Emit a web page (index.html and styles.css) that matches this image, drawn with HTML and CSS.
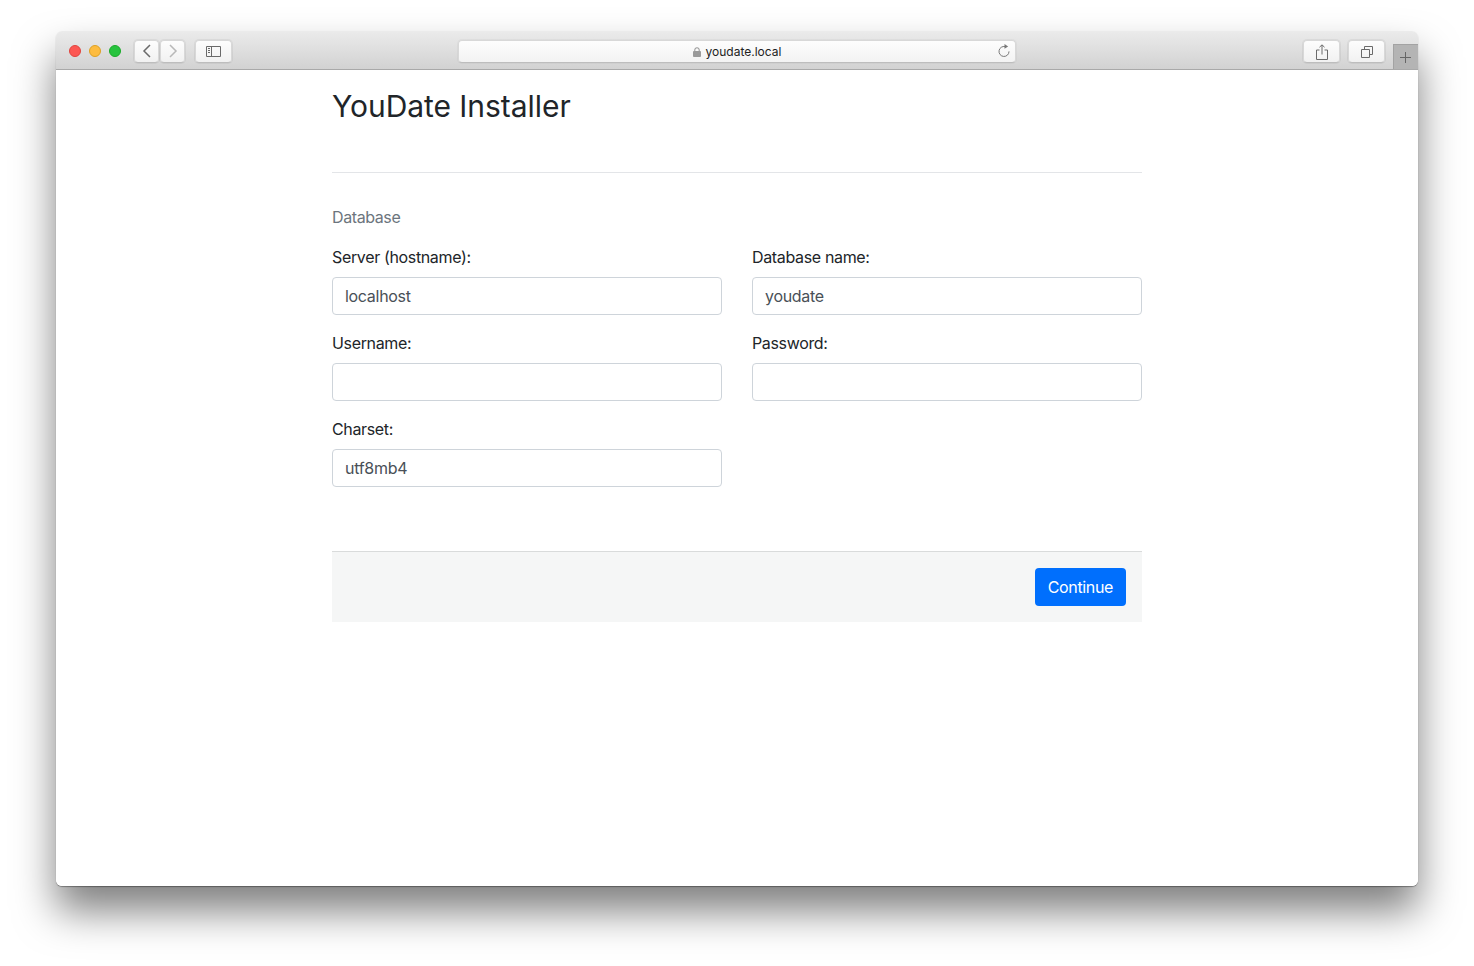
FILE: index.html
```html
<!DOCTYPE html>
<html lang="en">
<head>
  <meta charset="UTF-8">
  <title>YouDate Installer</title>
  <link rel="stylesheet" href="styles.css">
</head>
<body>
  <div class="window">
    <div class="titlebar">
      <div class="lights">
        <span class="light red"></span>
        <span class="light yellow"></span>
        <span class="light green"></span>
      </div>
      <div class="nav-group">
        <button class="tool tool-nav">
          <svg width="10" height="14" viewBox="0 0 10 14"><path d="M8 1 L2 7 L8 13" fill="none" stroke="#6a6a6a" stroke-width="1.5"/></svg>
        </button>
        <button class="tool tool-nav">
          <svg width="10" height="14" viewBox="0 0 10 14"><path d="M2 1 L8 7 L2 13" fill="none" stroke="#b8b8b8" stroke-width="1.5"/></svg>
        </button>
      </div>
      <button class="tool tool-side">
        <svg width="15" height="11" viewBox="0 0 15 11"><path d="M.5.5h14v10H.5zM5.5.5v10" fill="none" stroke="#6a6a6a"/><path d="M2 2.500h2M2 4.500h2M2 6.500h2" stroke="#6a6a6a"/></svg>
      </button>
      <div class="address">
        <svg class="lock" width="8" height="10" viewBox="0 0 9 11"><path d="M2 5V3.200a2.500 2.500 0 0 1 5 0V5" fill="none" stroke="#9a9a9a" stroke-width="1.200"/><rect y="4.500" width="9" height="6.500" rx="1" fill="#9a9a9a"/></svg>
        <span>youdate.local</span>
        <svg class="reload" width="12" height="13" viewBox="0 0 12 13"><path d="M7.200 2.600A5 5 0 1 0 11 7.400" fill="none" stroke="#777" stroke-width="1"/><path d="M6.500 0l3.600 2.600-3.600 2.200z" fill="#777"/></svg>
      </div>
      <div class="right-tools">
        <button class="tool tool-right">
          <svg width="12" height="16" viewBox="0 0 12 16"><path d="M3.500 6H.5v9.500h11V6h-3M6 10.500V1M3.500 3.200 6 .8l2.500 2.400" fill="none" stroke="#6a6a6a"/></svg>
        </button>
        <button class="tool tool-right">
          <svg width="12" height="12" viewBox="0 0 12 12"><path d="M.5 3.500h8v8h-8zM3.500 3.500v-3h8v8h-3" fill="none" stroke="#6a6a6a"/></svg>
        </button>
      </div>
      <div class="newtab">
        <svg width="11" height="11" viewBox="0 0 11 11"><path d="M5.500 0v11M0 5.500h11" stroke="#666"/></svg>
      </div>
    </div>

    <div class="page">
      <div class="container">
        <h1>YouDate Installer</h1>
        <hr>
        <p class="section-title">Database</p>
        <form class="form-grid">
          <div class="field">
            <label>Server (hostname):</label>
            <input type="text" value="localhost">
          </div>
          <div class="field">
            <label>Database name:</label>
            <input type="text" value="youdate">
          </div>
          <div class="field">
            <label>Username:</label>
            <input type="text">
          </div>
          <div class="field">
            <label>Password:</label>
            <input type="text">
          </div>
          <div class="field">
            <label>Charset:</label>
            <input type="text" value="utf8mb4">
          </div>
        </form>
        <div class="footer-bar">
          <button class="btn-primary">Continue</button>
        </div>
      </div>
    </div>
  </div>
</body>
</html>
```

FILE: styles.css
```css
html, body {
  height: 100%;
}
body {
  margin: 0;
  padding: 31px 56px 0;
  box-sizing: border-box;
  background: #fff;
  font-family: Inter, "Liberation Sans", sans-serif;
  color: #212529;
  overflow: hidden;
}
.window {
  height: 855px;
  border-radius: 6px;
  background: #fff;
  box-shadow: 0 1px 1px rgba(0,0,0,0.35), 0 25px 40px rgba(0,0,0,0.5);
  display: flex;
  flex-direction: column;
}
.titlebar {
  position: relative;
  height: 36px;
  flex: none;
  display: flex;
  align-items: center;
  padding: 2px 0 0 13px;
  background: linear-gradient(#ebebeb, #d2d2d2);
  border-bottom: 1px solid #a9a9a9;
  border-radius: 6px 6px 0 0;
}
.lights {
  display: flex;
  gap: 8px;
  margin-right: 13px;
}
.light {
  width: 12px;
  height: 12px;
  border-radius: 50%;
  box-sizing: border-box;
}
.red { background: #fc5753; border: 1px solid #e0443e; }
.yellow { background: #fdbc40; border: 1px solid #dea123; }
.green { background: #27c33e; border: 1px solid #1aab29; }
.tool {
  height: 23px;
  padding: 0;
  display: flex;
  align-items: center;
  justify-content: center;
  background: linear-gradient(#fdfdfd, #f1f1f1);
  border: 1px solid #d8d8d8;
  border-bottom-color: #bdbdbd;
  border-radius: 4px;
  box-sizing: border-box;
  box-shadow: 0 0 0 1px rgba(0,0,0,0.05);
}
.nav-group {
  display: flex;
  gap: 1px;
}
.tool-nav {
  width: 25px;
}
.tool-side {
  width: 37px;
  margin-left: 10px;
}
.address {
  position: absolute;
  left: 402px;
  top: 9px;
  width: 558px;
  height: 23px;
  box-sizing: border-box;
  display: flex;
  align-items: center;
  justify-content: center;
  gap: 5px;
  background: linear-gradient(#fdfdfd, #f3f3f3);
  border: 1px solid #d8d8d8;
  border-bottom-color: #bdbdbd;
  border-radius: 4px;
  box-shadow: 0 0 0 1px rgba(0,0,0,0.03);
  font-size: 12px;
  color: #222;
}
.reload {
  position: absolute;
  right: 5px;
  top: 3px;
}
.right-tools {
  position: absolute;
  left: 1247px;
  top: 9px;
  display: flex;
  gap: 8px;
}
.tool-right {
  width: 37px;
}
.newtab {
  position: absolute;
  right: 0;
  top: 13px;
  width: 25px;
  height: 25px;
  padding: 0 1px 0 0;
  display: flex;
  align-items: center;
  justify-content: center;
  background: #b4b4b4;
  border-left: 1px solid #a3a3a3;
  border-top: 1px solid #a3a3a3;
  box-sizing: border-box;
}
.page {
  flex: 1;
  background: #fff;
  border-radius: 0 0 6px 6px;
}
.container {
  width: 810px;
  margin: 0 auto;
}
h1 {
  margin: 0;
  padding-top: 16px;
  height: 86px;
  font-size: 30px;
  line-height: 40px;
  font-weight: 400;
  letter-spacing: -0.05px;
}
hr {
  margin: 0 0 32px;
  border: none;
  border-top: 1px solid #e3e5e8;
}
.section-title {
  margin: 0 0 16px;
  font-size: 16px;
  line-height: 24px;
  letter-spacing: -0.4px;
  color: #6c757d;
}
.form-grid {
  display: grid;
  grid-template-columns: 390px 390px;
  column-gap: 30px;
  row-gap: 16px;
}
.field label {
  display: block;
  margin-bottom: 8px;
  font-size: 16px;
  line-height: 24px;
  letter-spacing: -0.35px;
}
.field input {
  display: block;
  width: 100%;
  height: 38px;
  box-sizing: border-box;
  padding: 6px 12px;
  font: 400 16px/24px Inter, "Liberation Sans", sans-serif;
  letter-spacing: -0.3px;
  color: #495057;
  background: #fff;
  border: 1px solid #ced4da;
  border-radius: 4px;
}
.footer-bar {
  margin-top: 64px;
  height: 71px;
  box-sizing: border-box;
  padding: 16px;
  display: flex;
  justify-content: flex-end;
  background: #f5f6f6;
  border-top: 1px solid #d9dbdb;
}
.btn-primary {
  height: 38px;
  padding: 6px 13px;
  font: 400 16px/24px Inter, "Liberation Sans", sans-serif;
  letter-spacing: -0.35px;
  color: #fff;
  background: #006ffd;
  border: none;
  border-radius: 4px;
}
```
